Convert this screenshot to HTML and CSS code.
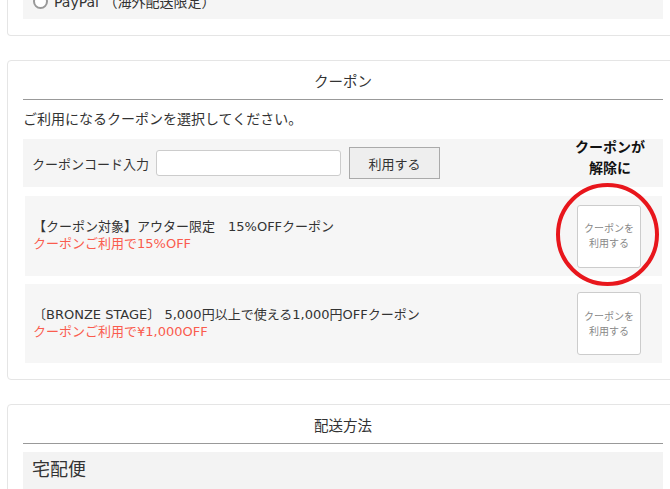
FILE: index.html
```html
<!doctype html>
<html lang="ja">
    <head>
        <meta charset="UTF-8" />
        <meta name="viewport" content="width=device-width, initial-scale=1.0" />
        <title>ご注文手続き</title>
        <link rel="stylesheet" href="styles.css">
    </head>
    <body>
        <div class="page">
            <div class="card card-payment">
                <div class="pay-option">
                    <span class="radio"></span>
                    <span class="pay-label">PayPal （海外配送限定）</span>
                </div>
            </div>

            <div class="card card-coupon">
                <h2 class="card-title">クーポン</h2>
                <p class="card-lead">ご利用になるクーポンを選択してください。</p>

                <div class="code-row">
                    <span class="code-label">クーポンコード入力</span>
                    <input class="code-input" type="text" />
                    <button class="code-button" type="button">利用する</button>
                </div>

                <div class="coupon-item">
                    <div class="coupon-text">
                        <div class="coupon-name">【クーポン対象】アウター限定　15%OFFクーポン</div>
                        <div class="coupon-off">クーポンご利用で15%OFF</div>
                    </div>
                    <button class="coupon-button" type="button">クーポンを<br>利用する</button>
                </div>

                <div class="coupon-item">
                    <div class="coupon-text">
                        <div class="coupon-name">〔BRONZE STAGE〕 5,000円以上で使える1,000円OFFクーポン</div>
                        <div class="coupon-off">クーポンご利用で¥1,000OFF</div>
                    </div>
                    <button class="coupon-button" type="button">クーポンを<br>利用する</button>
                </div>

                <!-- annotation drawn over the screenshot -->
                <div class="note">クーポンが<br>解除に</div>
                <div class="note-circle"></div>
            </div>

            <div class="card card-delivery">
                <h2 class="card-title">配送方法</h2>
                <div class="delivery-option">宅配便</div>
            </div>
        </div>
    </body>
</html>
```

FILE: styles.css
```css
* {
    margin: 0;
    padding: 0;
    box-sizing: border-box;
}

html,
body {
    overflow: hidden;
}

body {
    font-family: "DejaVu Sans", "Noto Sans CJK JP", sans-serif;
    font-size: 13px;
    color: #333;
    background: #fff;
}

.page {
    width: 720px;
    margin-top: -17px;
}

.card {
    width: 700px;
    margin-left: 7px;
    border: 1px solid #e5e5e5;
    border-radius: 4px;
    padding: 0 43px 16px 15px;
}

.card + .card {
    margin-top: 24px;
}

.card-payment {
    border-top: none;
}

.pay-option {
    display: flex;
    align-items: center;
    height: 36px;
    padding-left: 10px;
    background: #f5f5f5;
}

.radio {
    width: 15px;
    height: 15px;
    border: 2px solid #999;
    border-radius: 50%;
    background: #fff;
}

.pay-label {
    margin-left: 6px;
    font-size: 14px;
}

.card-title {
    padding: 12px 0 8px;
    font-size: 14.5px;
    font-weight: normal;
    line-height: 18px;
    text-align: center;
    border-bottom: 1px solid #999;
}

.card-coupon {
    position: relative;
}

.card-lead {
    margin: 10px 0 11px;
    font-size: 14px;
    line-height: 18px;
}

.code-row {
    display: flex;
    align-items: center;
    height: 48px;
    padding: 0 9px;
    background: #f5f5f5;
}

.code-label {
    flex-shrink: 0;
    width: 116px;
    white-space: nowrap;
}

.code-input {
    flex-shrink: 0;
    width: 185px;
    height: 26px;
    margin-left: 8px;
    border: 1px solid #ccc;
    border-radius: 3px;
    background: #fff;
}

.code-button {
    flex-shrink: 0;
    width: 91px;
    height: 32px;
    margin-left: 8px;
    border: 1px solid #aaa;
    background: #eee;
    font-family: inherit;
    font-size: 13px;
    color: #333;
}

.coupon-item {
    display: flex;
    align-items: center;
    justify-content: space-between;
    width: 637px;
    height: 80px;
    margin: 9px 0 0 2px;
    padding: 0 21px 0 8px;
    background: #f6f6f6;
}

.coupon-item + .coupon-item {
    height: 79px;
    margin-top: 8px;
}

.coupon-text {
    line-height: 17px;
    padding-bottom: 2px;
    white-space: nowrap;
}

.coupon-off {
    color: #fa5c4e;
}

.coupon-button {
    flex-shrink: 0;
    width: 64px;
    height: 63px;
    border: 1px solid #ccc;
    border-radius: 3px;
    background: #fff;
    font-family: inherit;
    font-size: 10px;
    line-height: 15px;
    color: #888;
}

.note {
    position: absolute;
    left: 552px;
    top: 76px;
    width: 100px;
    font-size: 14px;
    font-weight: bold;
    line-height: 21px;
    text-align: center;
    color: #111;
}

.note-circle {
    position: absolute;
    left: 548px;
    top: 122px;
    width: 103px;
    height: 103px;
    border: 4px solid #e8161c;
    border-radius: 50%;
}

.delivery-option {
    margin-top: 8px;
    height: 60px;
    padding: 7px 9px;
    background: #f3f3f3;
    font-size: 18px;
    line-height: 22px;
}
```
